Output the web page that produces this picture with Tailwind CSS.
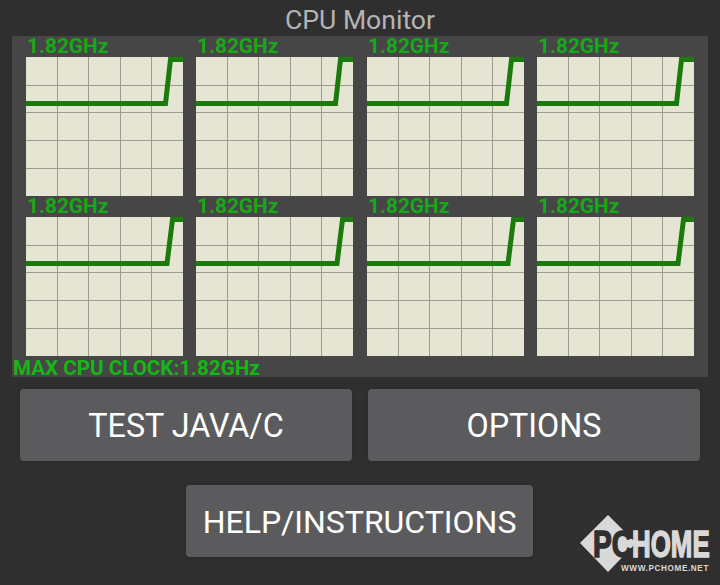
<!DOCTYPE html>
<html lang="en">
<head>
    <meta charset="UTF-8">
    <title>CPU Monitor</title>
    <script src="https://cdn.jsdelivr.net/npm/@tailwindcss/browser@4"></script>
</head>
<body class="bg-[#2f2f2f] font-['Roboto',sans-serif] w-[720px] h-[585px] overflow-hidden relative">

    <h1 class="h-9 text-center text-[26.6px] leading-[39px] text-[#b4b4b4]">CPU Monitor</h1>

    <!-- panel with the 8 core graphs -->
    <div class="mx-3 w-[696px] h-[341px] bg-[#464646] relative">
        <div id="graphs" class="grid grid-cols-[170px_171px_170px_157px] pl-[14px]"></div>
        <p class="absolute left-[1px] top-[320px] text-[20.6px] leading-[24px] font-bold text-[#17b517] whitespace-nowrap">MAX CPU CLOCK:1.82GHz</p>
    </div>

    <div class="flex gap-4 px-5 mt-3">
        <button class="w-[332px] h-[72px] bg-[#5b5b5d] rounded text-white text-[32.3px] font-[450] leading-[74px] shadow-sm">TEST JAVA/C</button>
        <button class="w-[332px] h-[72px] bg-[#5b5b5d] rounded text-white text-[32.3px] font-[450] leading-[74px] shadow-sm">OPTIONS</button>
    </div>
    <div class="flex justify-center mt-6 pr-[1px]">
        <button class="w-[347px] h-[72px] bg-[#5b5b5d] rounded text-white text-[32px] font-[450] leading-[74px] shadow-sm">HELP/INSTRUCTIONS</button>
    </div>

    <!-- watermark -->
    <svg class="absolute left-[570px] top-[505px]" width="150" height="80" viewBox="0 0 150 80">
        <polygon points="10,38 38,10 66,38 38,67" fill="#d9d9d9"/>
        <text transform="translate(23 52) scale(.76 1)" font-family="Liberation Sans" font-weight="700" font-size="37" fill="#2f2f2f" stroke="#2f2f2f" stroke-width="1.5">PC</text>
        <text transform="translate(62 52) scale(.7 1)" font-family="Liberation Sans" font-weight="700" font-size="37" fill="#d9d9d9" stroke="#d9d9d9" stroke-width="1.5">HOME</text>
        <path d="M87 34 l5 8 -2 0 2 4 -2 1 -2 -4 -2 1z" fill="#2f2f2f"/>
        <text x="51" y="66" font-family="Liberation Sans" font-weight="700" font-size="8.2" letter-spacing=".6" fill="#d9d9d9">WWW.PCHOME.NET</text>
    </svg>

    <script>
        function graph(flatY, bottomX, topX) {
            return '<div>' +
                '<div class="h-[21px] pl-[1px] text-[20.8px] leading-[21px] font-bold text-[#17a917] whitespace-nowrap">1.82GHz</div>' +
                '<svg class="block bg-[#e6e4d2]" width="157" height="139" viewBox="0 0 157 139">' +
                '<g stroke="#9c9b92" stroke-width="1" fill="none">' +
                '<path d="M31.5 0V139M62.5 0V139M94.5 0V139M125.5 0V139"/>' +
                '<path d="M0 28.5H157M0 55.5H157M0 83.5H157M0 111.5H157"/>' +
                '</g>' +
                '<path d="M0 ' + flatY + 'H' + bottomX + 'L' + topX + ' 2.5H157" stroke="#1a7a0c" stroke-width="5" fill="none"/>' +
                '</svg></div>';
        }
        var html = '';
        for (var i = 0; i < 8; i++) html += i < 4 ? graph(46.5, 139.5, 144.5) : graph(46.5, 141, 146.5);
        document.getElementById('graphs').innerHTML = html;
    </script>
</body>
</html>
